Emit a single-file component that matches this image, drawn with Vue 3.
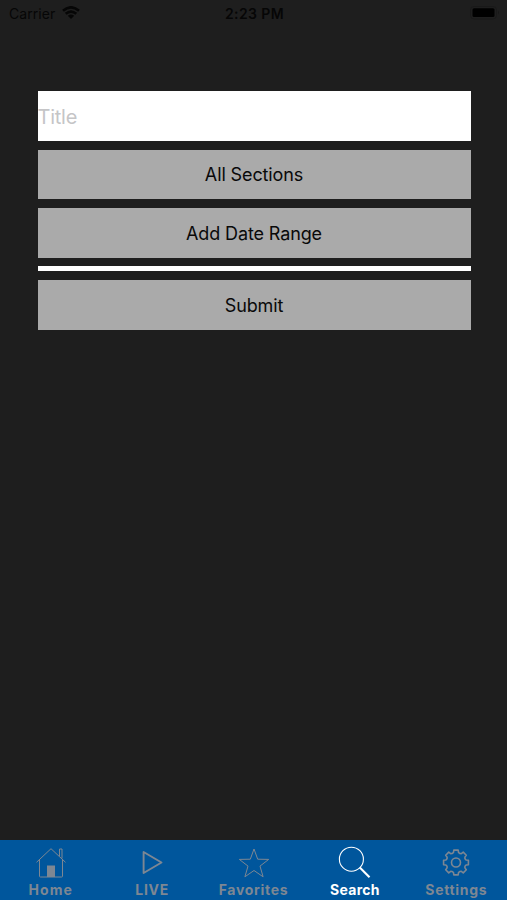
<script setup>
import { ref } from 'vue'

const title = ref('')
const active = ref('Search')
const tabs = ['Home', 'LIVE', 'Favorites', 'Search', 'Settings']

// Eight-toothed outline around the origin, top tooth centred at -90 degrees.
const gear = Array.from({ length: 8 }, (_, i) =>
  [[-22.5, 9.7], [-14, 10.4], [-10, 12.6], [10, 12.6], [14, 10.4]].map(([offset, r]) => {
    const a = ((i * 45 - 90 + offset) * Math.PI) / 180
    return `${(r * Math.cos(a)).toFixed(2)},${(r * Math.sin(a)).toFixed(2)}`
  })
).flat().join(' ')
</script>

<template>
  <div class="screen">
    <header class="status">
      <div class="carrier">
        <span>Carrier</span>
        <svg class="wifi" width="18" height="13" viewBox="0 0 18 13">
          <path d="M1 4.8 Q9 -2.2 17 4.8M3.7 7.8 Q9 3.3 14.3 7.8" fill="none" stroke="currentColor" stroke-width="2.6" />
          <path d="M5.8 9.8 Q9 7.2 12.2 9.8L9 12.9Z" fill="currentColor" />
        </svg>
      </div>
      <span class="clock">2:23 PM</span>
      <svg class="battery" width="30" height="14" viewBox="0 0 30 14">
        <rect x="0.5" y="0.5" width="26" height="12.5" rx="3.5" fill="none" stroke="#191919" />
        <rect x="2.5" y="2.3" width="22" height="8.8" rx="1.5" fill="#000" />
        <path d="M28 4.5q2 2 0 4z" fill="#181818" />
      </svg>
    </header>

    <form class="form" @submit.prevent>
      <input v-model="title" class="field" placeholder="Title" />
      <button type="button" class="btn sections">All Sections</button>
      <button type="button" class="btn range">Add Date Range</button>
      <div class="divider"></div>
      <button type="submit" class="btn submit">Submit</button>
    </form>

    <nav class="tabs">
      <a v-for="tab in tabs" :key="tab" class="tab" :class="[tab.toLowerCase(), { active: tab === active }]" @click="active = tab">
        <svg width="36" height="34" viewBox="0 0 36 34" fill="none" stroke="currentColor">
          <g v-if="tab === 'Home'" stroke-width="1">
            <path d="M3.5 17.3 18 3.7 32.5 17.3M6.5 15V31.2q0 .8.8.8H28.7q.8 0 .8-.8V15M26.5 11V4H29V13.5" />
            <path d="M14 20.5h8V32h-8z" fill="currentColor" stroke="none" />
          </g>
          <path v-else-if="tab === 'LIVE'" d="M9.6 7V28L27.5 17.5Z" stroke-width="1.9" stroke-linejoin="round" />
          <path v-else-if="tab === 'Favorites'" d="M18 4 21.7 14.2 32.7 14.4 24 21.1 27.1 31.8 18 25.5 8.9 31.8 12 21.1 3.3 14.4 14.3 14.2Z" />
          <g v-else-if="tab === 'Search'">
            <circle cx="14.4" cy="14.2" r="12" stroke-width="1.1" />
            <path d="M22.8 22.6 32.5 32.2" stroke-width="2.1" />
          </g>
          <g v-else transform="translate(18 17.5)" stroke-width="1.6" stroke-linejoin="round">
            <polygon :points="gear" />
            <circle r="4.5" />
          </g>
        </svg>
        <span class="label">{{ tab }}</span>
      </a>
    </nav>
  </div>
</template>

<style>
body {
  margin: 0;
  background: #1e1e1e;
}
</style>

<style scoped>
.screen {
  box-sizing: border-box;
  width: 507px;
  height: 900px;
  display: flex;
  flex-direction: column;
  background: #1e1e1e;
  color: #000;
  font-family: Inter, 'Liberation Sans', sans-serif;
}
.status {
  box-sizing: border-box;
  height: 28px;
  padding: 0 7px 2px 9px;
  display: grid;
  grid-template-columns: 1fr auto 1fr;
  align-items: center;
  font-size: 14px;
  color: #060606;
}
.carrier {
  display: flex;
  align-items: center;
  gap: 7px;
  letter-spacing: 0.05px;
}
.wifi {
  margin-top: -1px;
}
.clock {
  font-weight: 600;
  letter-spacing: 0.4px;
}
.battery {
  justify-self: end;
}
.form {
  padding: 63px 36.5px 0 37.5px;
  display: flex;
  flex-direction: column;
}
.field,
.btn {
  box-sizing: border-box;
  width: 100%;
  height: 50px;
  border: 0;
  border-radius: 0;
  font-family: inherit;
  outline: 0;
}
.field {
  padding: 2px 0 0;
  background: #fff;
  font-size: 20px;
  letter-spacing: -0.25px;
}
.field::placeholder {
  color: #c5c5c7;
  opacity: 1;
}
.btn {
  margin-top: 9px;
  padding: 0;
  background: #aaa;
  color: #090909;
  font-size: 18px;
  letter-spacing: -0.12px;
}
.sections {
  height: 49px;
}
.divider {
  height: 5px;
  margin-top: 8px;
  background: #fff;
}
.tabs {
  height: 60px;
  margin-top: auto;
  display: flex;
  background: #00569c;
}
.tab {
  flex: 1;
  display: flex;
  flex-direction: column;
  align-items: center;
  padding-top: 5px;
  color: #7d8793;
}
.tab.active {
  color: #fff;
}
.label {
  margin-top: 2px;
  font-size: 14px;
  line-height: 17px;
  font-weight: 700;
  letter-spacing: 0.7px;
}
.home .label {
  letter-spacing: 1px;
}
.search .label {
  letter-spacing: 0.3px;
}
</style>
